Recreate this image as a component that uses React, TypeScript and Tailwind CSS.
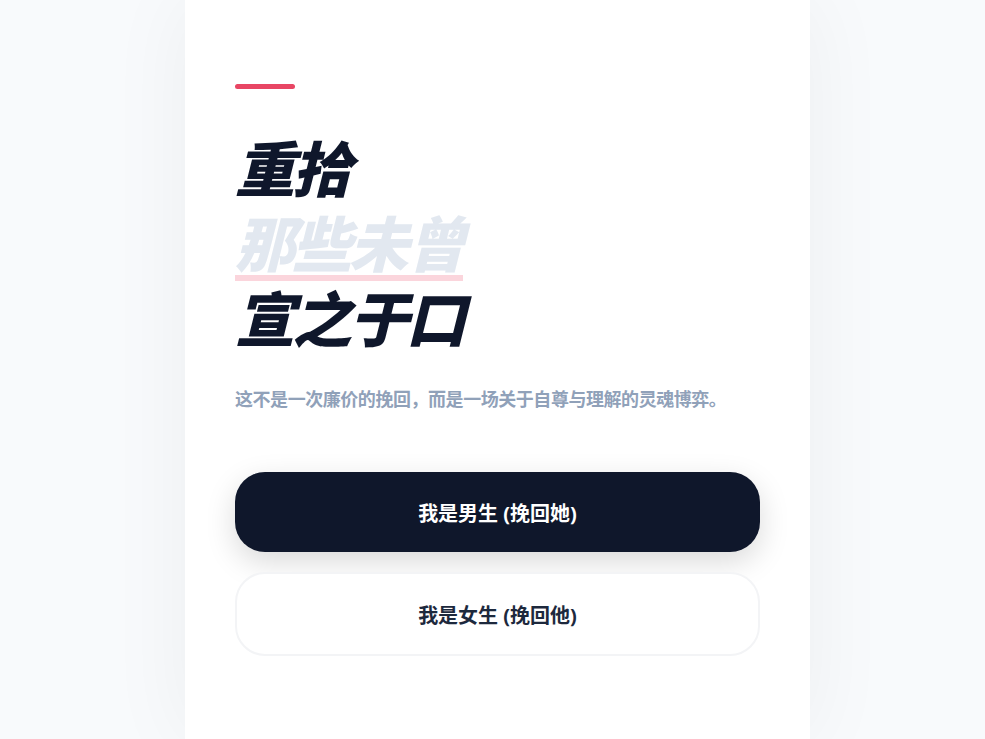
const choices = [
  {
    label: "我是男生 (挽回她)",
    style: "bg-slate-900 text-white shadow-[0_10px_30px_rgba(0,0,0,0.15)]",
  },
  {
    label: "我是女生 (挽回他)",
    style: "border-2 border-gray-100 bg-white text-slate-800",
  },
];

export default function App() {
  return (
    <div className="min-h-screen bg-slate-50 pl-[10px] font-['Open_Sans','Noto_Sans_CJK_SC',sans-serif]">
      <main className="mx-auto flex min-h-screen max-w-[625px] flex-col justify-center bg-white px-[50px] py-20 shadow-[0_0_80px_rgba(0,0,0,0.05)]">
        <div className="mb-[43px] h-[5px] w-[60px] rounded-full bg-[#e84664]" />
        <h1 className="mb-7 text-[60px] leading-[75px] font-black tracking-tighter text-slate-900 italic">
          重拾
          <br />
          <span className="text-slate-200 underline decoration-[#fbd5dc] decoration-[6px] underline-offset-[8px]">
            那些未曾
          </span>
          <br />
          宣之于口
        </h1>
        <p className="mb-[59px] text-[18px] leading-[28px] font-bold tracking-tight text-slate-400">
          这不是一次廉价的挽回，而是一场关于自尊与理解的灵魂博弈。
        </p>
        <div className="flex flex-col gap-5">
          {choices.map((choice) => (
            <button
              key={choice.label}
              type="button"
              className={`rounded-[30px] pt-7 pb-6 text-[20px] leading-[28px] font-bold ${choice.style}`}
            >
              {choice.label}
            </button>
          ))}
        </div>
      </main>
    </div>
  );
}
